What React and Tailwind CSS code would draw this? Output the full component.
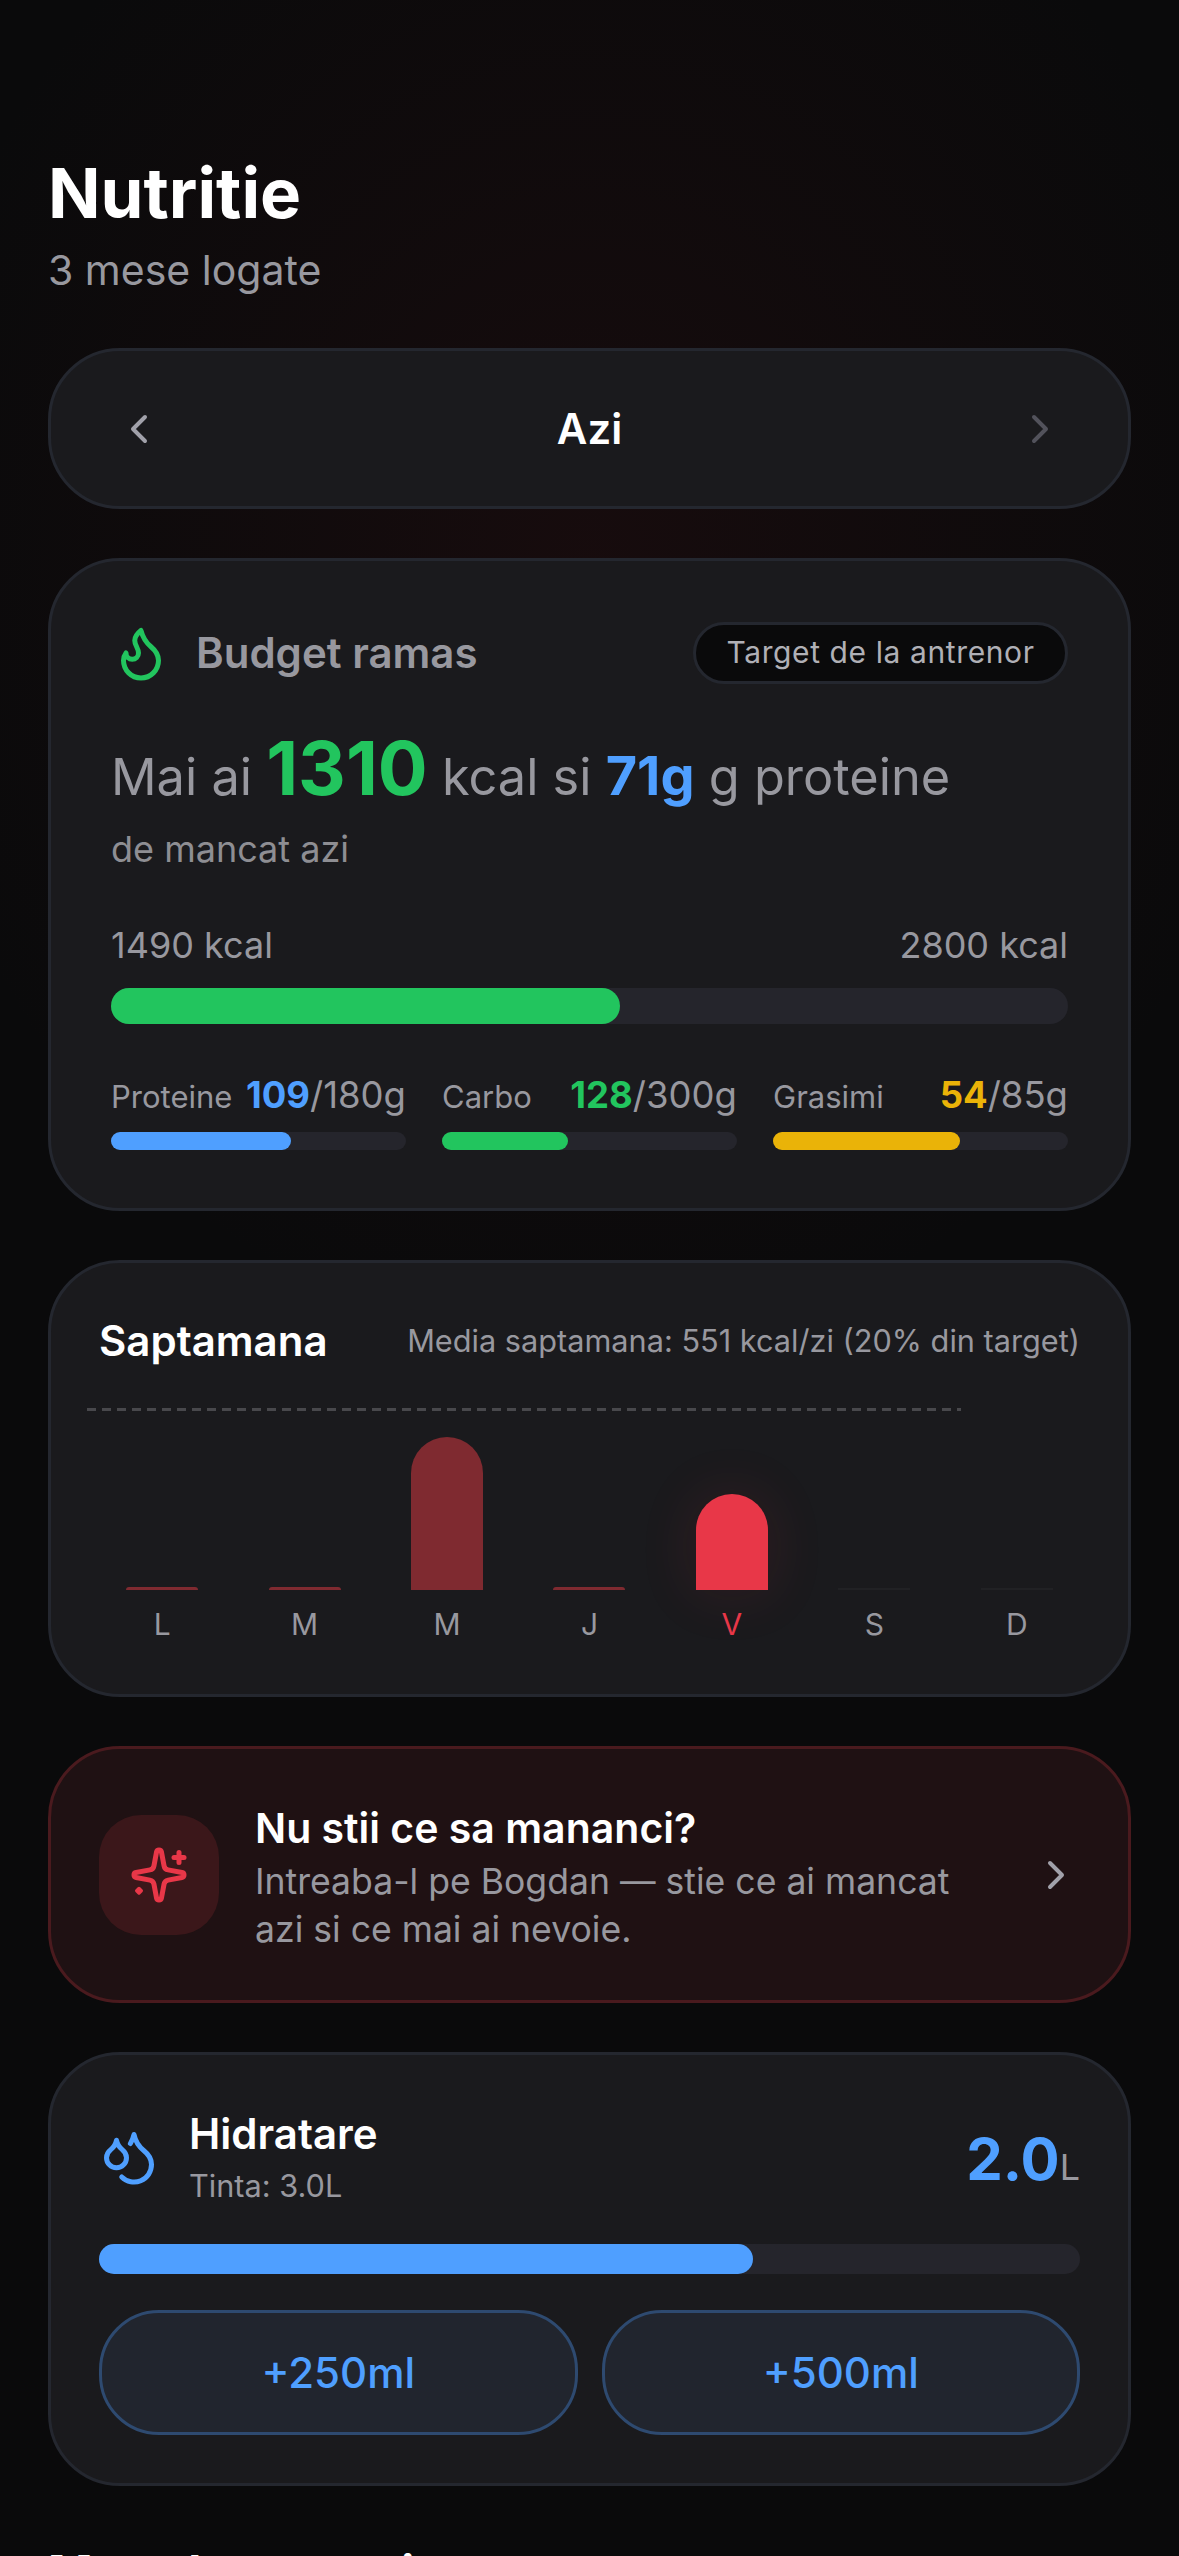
import { ChevronLeft, ChevronRight, Flame, Droplets } from "lucide-react";

const macros = [
  { label: "Proteine", value: 109, target: "180g", pct: "w-[61%]", text: "text-[#4f9fff]", bar: "bg-[#4f9fff]" },
  { label: "Carbo", value: 128, target: "300g", pct: "w-[42.7%]", text: "text-[#22c55e]", bar: "bg-[#22c55e]" },
  { label: "Grasimi", value: 54, target: "85g", pct: "w-[63.5%]", text: "text-[#eab308]", bar: "bg-[#eab308]" },
];

const days = [
  { label: "L", bar: "h-[3px] rounded-t-[3px] bg-[#7f2a30]" },
  { label: "M", bar: "h-[3px] rounded-t-[3px] bg-[#7f2a30]" },
  { label: "M", bar: "h-[153px] rounded-t-[36px] bg-[#7f2a30]" },
  { label: "J", bar: "h-[3px] rounded-t-[3px] bg-[#7f2a30]" },
  { label: "V", bar: "h-[96px] rounded-t-[36px] bg-[#e83748] shadow-[0_0_60px_rgba(232,55,72,0.12)]", active: true },
  { label: "S", bar: "h-[2px] bg-[#212124]" },
  { label: "D", bar: "h-[2px] bg-[#212124]" },
];

function Card({ className = "", children }) {
  return (
    <div className={`rounded-[72px] border-[3px] border-[#24272f] bg-[#1a1a1d] ${className}`}>
      {children}
    </div>
  );
}

function SparkIcon() {
  return (
    <svg width="60" height="60" viewBox="0 0 24 24" fill="none" stroke="currentColor" strokeWidth="2" strokeLinecap="round" strokeLinejoin="round" className="text-[#e83748]">
      <path d="M11.017 2.814a1 1 0 0 1 1.966 0l1.051 5.558a2 2 0 0 0 1.594 1.594l5.558 1.051a1 1 0 0 1 0 1.966l-5.558 1.051a2 2 0 0 0-1.594 1.594l-1.051 5.558a1 1 0 0 1-1.966 0l-1.051-5.558a2 2 0 0 0-1.594-1.594l-5.558-1.051a1 1 0 0 1 0-1.966l5.558-1.051a2 2 0 0 0 1.594-1.594z" />
      <path d="M20 3v4" />
      <path d="M22 5h-4" />
      <path d="M4 17.4 4.9 18.3 4 19.2 3.1 18.3z" fill="currentColor" strokeWidth="1.4" />
    </svg>
  );
}

export default function App() {
  return (
    <div
      className="h-[2556px] overflow-hidden bg-[#0a0a0b] bg-[radial-gradient(ellipse_700px_800px_at_50%_560px,rgba(90,20,25,0.16),transparent)] px-[48px] pt-[159px] text-white"
      style={{ fontFamily: "Inter, 'Liberation Sans', sans-serif" }}
    >
      <h1 className="text-[69px] leading-[68px] font-bold">Nutritie</h1>
      <p className="mt-[18px] text-[41px] leading-[50px] text-[#98989f]">3 mese logate</p>

      <div className="mt-[53px] flex flex-col gap-[49px]">
        <Card className="flex h-[161px] items-center justify-between px-[64px]">
          <ChevronLeft size={48} strokeWidth={2} className="text-[#a1a1aa]" />
          <span className="text-[42px] font-semibold">Azi</span>
          <ChevronRight size={48} strokeWidth={2} className="text-[#52525b]" />
        </Card>

        <Card className="h-[653px] px-[60px] pt-[60px]">
          <div className="flex items-center justify-between">
            <div className="flex items-center gap-[25px]">
              <Flame size={60} strokeWidth={2} className="text-[#22c55e]" />
              <span className="text-[42px] font-semibold text-[#98989f]">Budget ramas</span>
            </div>
            <span className="flex h-[62px] w-[375px] items-center justify-center rounded-full border-[3px] border-[#24272f] bg-[#0a0a0b] text-[30px] tracking-[0.6px] text-[#b0b0b6]">
              Target de la antrenor
            </span>
          </div>

          <p className="mt-[44px] text-[50.5px] leading-[80px] whitespace-nowrap text-[#98989f]">
            Mai ai <span className="text-[74px] font-bold text-[#22c55e]">1310</span> kcal si{" "}
            <span className="text-[54px] font-bold text-[#4f9fff]">71g</span> g proteine
          </p>
          <p className="mt-[8px] text-[36px] leading-[48px] text-[#8e8e93]">de mancat azi</p>

          <div className="mt-[48px] flex justify-between text-[36px] leading-[48px] text-[#98989f]">
            <span>1490 kcal</span>
            <span>2800 kcal</span>
          </div>
          <div className="mt-[19px] h-[36px] rounded-full bg-[#25252c]">
            <div className="h-full w-[53.2%] rounded-full bg-[#22c55e]" />
          </div>

          <div className="mt-[47px] grid grid-cols-3 gap-[36px]">
            {macros.map((m) => (
              <div key={m.label}>
                <div className="flex items-baseline justify-between leading-[48px] whitespace-nowrap text-[#98989f]">
                  <span className="text-[31px]">{m.label}</span>
                  <span className="text-[36.5px]">
                    <span className={`font-bold ${m.text}`}>{m.value}</span>/{m.target}
                  </span>
                </div>
                <div className="mt-[11px] h-[18px] rounded-full bg-[#25252c]">
                  <div className={`h-full rounded-full ${m.pct} ${m.bar}`} />
                </div>
              </div>
            ))}
          </div>
        </Card>

        <Card className="relative h-[437px] px-[48px] pt-[50px]">
          <div className="flex items-center justify-between">
            <span className="text-[42px] leading-[56px] font-semibold">Saptamana</span>
            <span className="text-[30.7px] leading-[56px] text-[#98989f]">Media saptamana: 551 kcal/zi (20% din target)</span>
          </div>
          <div className="absolute top-[145px] left-[36px] h-[3px] w-[874px] bg-[repeating-linear-gradient(90deg,#48484c_0_9px,transparent_9px_15px)]" />
          <div className="mt-[68px] -mx-[8px] grid h-[153px] grid-cols-7">
            {days.map((d, i) => (
              <div key={i} className="flex items-end justify-center">
                <div className={`w-[72px] ${d.bar}`} />
              </div>
            ))}
          </div>
          <div className="-mx-[8px] mt-[14px] grid grid-cols-7">
            {days.map((d, i) => (
              <span key={i} className={`text-center text-[30px] leading-[40px] ${d.active ? "text-[#e83748]" : "text-[#98989f]"}`}>
                {d.label}
              </span>
            ))}
          </div>
        </Card>

        <div className="flex h-[257px] items-center rounded-[72px] border-[3px] border-[#4a1a1e] bg-[#1f1113] pr-[48px] pl-[48px]">
          <div className="flex size-[120px] shrink-0 items-center justify-center rounded-[42px] bg-[#3b171a]">
            <SparkIcon />
          </div>
          <div className="ml-[36px] w-[720px] pt-[5px]">
            <div className="text-[41px] leading-[56px] font-semibold">Nu stii ce sa mananci?</div>
            <div className="mt-[2px] text-[35.6px] leading-[48px] text-[#98989f]">
              Intreaba-l pe Bogdan — stie ce ai mancat azi si ce mai ai nevoie.
            </div>
          </div>
          <ChevronRight size={48} strokeWidth={2} className="ml-auto text-[#a1a1aa]" />
        </div>

        <Card className="h-[434px] px-[48px] pt-[48px]">
          <div className="flex items-center justify-between">
            <div className="flex items-center gap-[30px]">
              <Droplets size={60} strokeWidth={2} className="text-[#4f9fff]" />
              <div className="pt-[3px]">
                <div className="text-[42px] leading-[56px] font-semibold">Hidratare</div>
                <div className="text-[30.7px] leading-[48px] text-[#98989f]">Tinta: 3.0L</div>
              </div>
            </div>
            <div className="mt-[12px] text-[58px] leading-[80px] font-bold text-[#4f9fff]">
              2.0<span className="text-[36px] font-normal text-[#98989f]">L</span>
            </div>
          </div>
          <div className="mt-[34px] h-[30px] rounded-full bg-[#25252c]">
            <div className="h-full w-[66.7%] rounded-full bg-[#4f9fff]" />
          </div>
          <div className="mt-[36px] grid grid-cols-2 gap-[24px]">
            {["+250ml", "+500ml"].map((t) => (
              <div key={t} className="flex h-[125px] items-center justify-center rounded-[60px] border-[3px] border-[#2e4a70] bg-[#21252e] text-[42px] font-medium text-[#4f9fff]">
                {t}
              </div>
            ))}
          </div>
        </Card>

        <h2 className="mt-[9px] text-[48px] leading-[58px] font-bold">Mese logate azi</h2>
      </div>
    </div>
  );
}
